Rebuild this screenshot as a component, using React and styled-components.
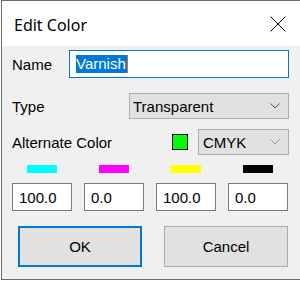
import React from "react";
import styled, { createGlobalStyle } from "styled-components";

const Global = createGlobalStyle`
  html, body { margin: 0; padding: 0; background: #ffffff; }
  body { font-family: "Liberation Sans", Arial, sans-serif; font-size: 15px; color: #000; overflow: hidden; }
`;

const Window = styled.div`
  margin-left: 1px;
  width: 299px;
  height: 278px;
  border: 1px solid #6b6b6b;
  border-right: none;
  display: flex;
  flex-direction: column;
  overflow: hidden;
`;

const TitleBar = styled.div`
  height: 45px;
  flex: none;
  background: #ffffff;
  display: flex;
  align-items: center;
  justify-content: space-between;
  padding: 0 15px 0 12px;
`;

const Title = styled.div`
  font-family: "Noto Sans", "Open Sans", sans-serif;
  font-size: 16px;
  color: #000;
  margin-top: 2px;
`;

const CloseIcon = styled.svg`
  width: 16px;
  height: 16px;
  display: block;
`;

const Body = styled.div`
  flex: 1;
  background: #f0f0f0;
  padding: 4px 12px 12px 10px;
  display: flex;
  flex-direction: column;
`;

const Row = styled.div`
  display: flex;
  align-items: center;
  justify-content: space-between;
  margin-top: ${(p) => p.$gap || 0}px;
  height: ${(p) => p.$h}px;
  flex: none;
`;

const Label = styled.span`
  font-size: 15px;
  color: #000;
  white-space: nowrap;
`;

const TextInput = styled.div`
  box-sizing: border-box;
  width: ${(p) => p.$w}px;
  height: 28px;
  border: 1px solid #0078d7;
  background: #fff;
  display: flex;
  align-items: center;
  padding-left: 6px;
`;

const Selected = styled.span`
  background: #0078d7;
  color: #fff;
  line-height: 18px;
  padding-right: 1px;
  border-right: 1px solid #e07020;
`;

const Select = styled.div`
  box-sizing: border-box;
  width: ${(p) => p.$w}px;
  height: 26px;
  border: 1px solid #adadad;
  background: #e1e1e1;
  display: flex;
  align-items: center;
  justify-content: space-between;
  padding: 0 8px 0 ${(p) => p.$pl || 3}px;
`;

const Chevron = styled.svg`
  width: 10px;
  height: 6px;
  display: block;
`;

const RightGroup = styled.div`
  display: flex;
  align-items: center;
  gap: 10px;
`;

const Swatch = styled.div`
  box-sizing: border-box;
  width: 16px;
  height: 16px;
  border: 1px solid #000;
  background: #00ff00;
`;

const Grid = styled.div`
  display: grid;
  grid-template-columns: repeat(4, 60px);
  column-gap: 12px;
  margin-top: ${(p) => p.$gap || 0}px;
  height: ${(p) => p.$h}px;
  flex: none;
`;

const BarCell = styled.div`
  display: flex;
  justify-content: center;
`;

const Bar = styled.div`
  width: 30px;
  height: 8px;
  background: ${(p) => p.$c};
`;

const NumBox = styled.div`
  box-sizing: border-box;
  height: 28px;
  border: 1px solid #7a7a7a;
  background: #fff;
  display: flex;
  align-items: center;
  padding-left: 6px;
`;

const ButtonRow = styled.div`
  display: flex;
  justify-content: space-between;
  margin-top: 15px;
  padding: 0 1px 0 6px;
  flex: none;
`;

const Button = styled.div`
  box-sizing: border-box;
  width: 124px;
  height: 41px;
  background: #e1e1e1;
  border: ${(p) => (p.$default ? "2px solid #0078d7" : "1px solid #adadad")};
  display: flex;
  align-items: center;
  justify-content: center;
  font-size: 15px;
`;

const ChevronIcon = ({ color }) => (
  <Chevron viewBox="0 0 10 6">
    <polyline points="0.5,0.5 5,5 9.5,0.5" fill="none" stroke={color} strokeWidth="1" />
  </Chevron>
);

export default function App() {
  const cmyk = [
    { c: "#00ffff", v: "100.0" },
    { c: "#ff00ff", v: "0.0" },
    { c: "#ffff00", v: "100.0" },
    { c: "#000000", v: "0.0" },
  ];
  return (
    <>
      <Global />
      <Window>
        <TitleBar>
          <Title>Edit Color</Title>
          <CloseIcon viewBox="0 0 16 16">
            <line x1="0.5" y1="0.5" x2="15.5" y2="15.5" stroke="#000" strokeWidth="1" />
            <line x1="15.5" y1="0.5" x2="0.5" y2="15.5" stroke="#000" strokeWidth="1" />
          </CloseIcon>
        </TitleBar>
        <Body>
          <Row $h={28}>
            <Label>Name</Label>
            <TextInput $w={220}>
              <Selected>Varnish</Selected>
            </TextInput>
          </Row>
          <Row $gap={15} $h={26}>
            <Label>Type</Label>
            <Select $w={160}>
              <span>Transparent</span>
              <ChevronIcon color="#555" />
            </Select>
          </Row>
          <Row $gap={10} $h={26}>
            <Label>Alternate Color</Label>
            <RightGroup>
              <Swatch />
              <Select $w={91} $pl={4}>
                <span>CMYK</span>
                <ChevronIcon color="#999" />
              </Select>
            </RightGroup>
          </Row>
          <Grid $gap={10} $h={8}>
            {cmyk.map((x, i) => (
              <BarCell key={i}>
                <Bar $c={x.c} />
              </BarCell>
            ))}
          </Grid>
          <Grid $gap={10} $h={28}>
            {cmyk.map((x, i) => (
              <NumBox key={i}>{x.v}</NumBox>
            ))}
          </Grid>
          <ButtonRow>
            <Button $default>OK</Button>
            <Button>Cancel</Button>
          </ButtonRow>
        </Body>
      </Window>
    </>
  );
}
